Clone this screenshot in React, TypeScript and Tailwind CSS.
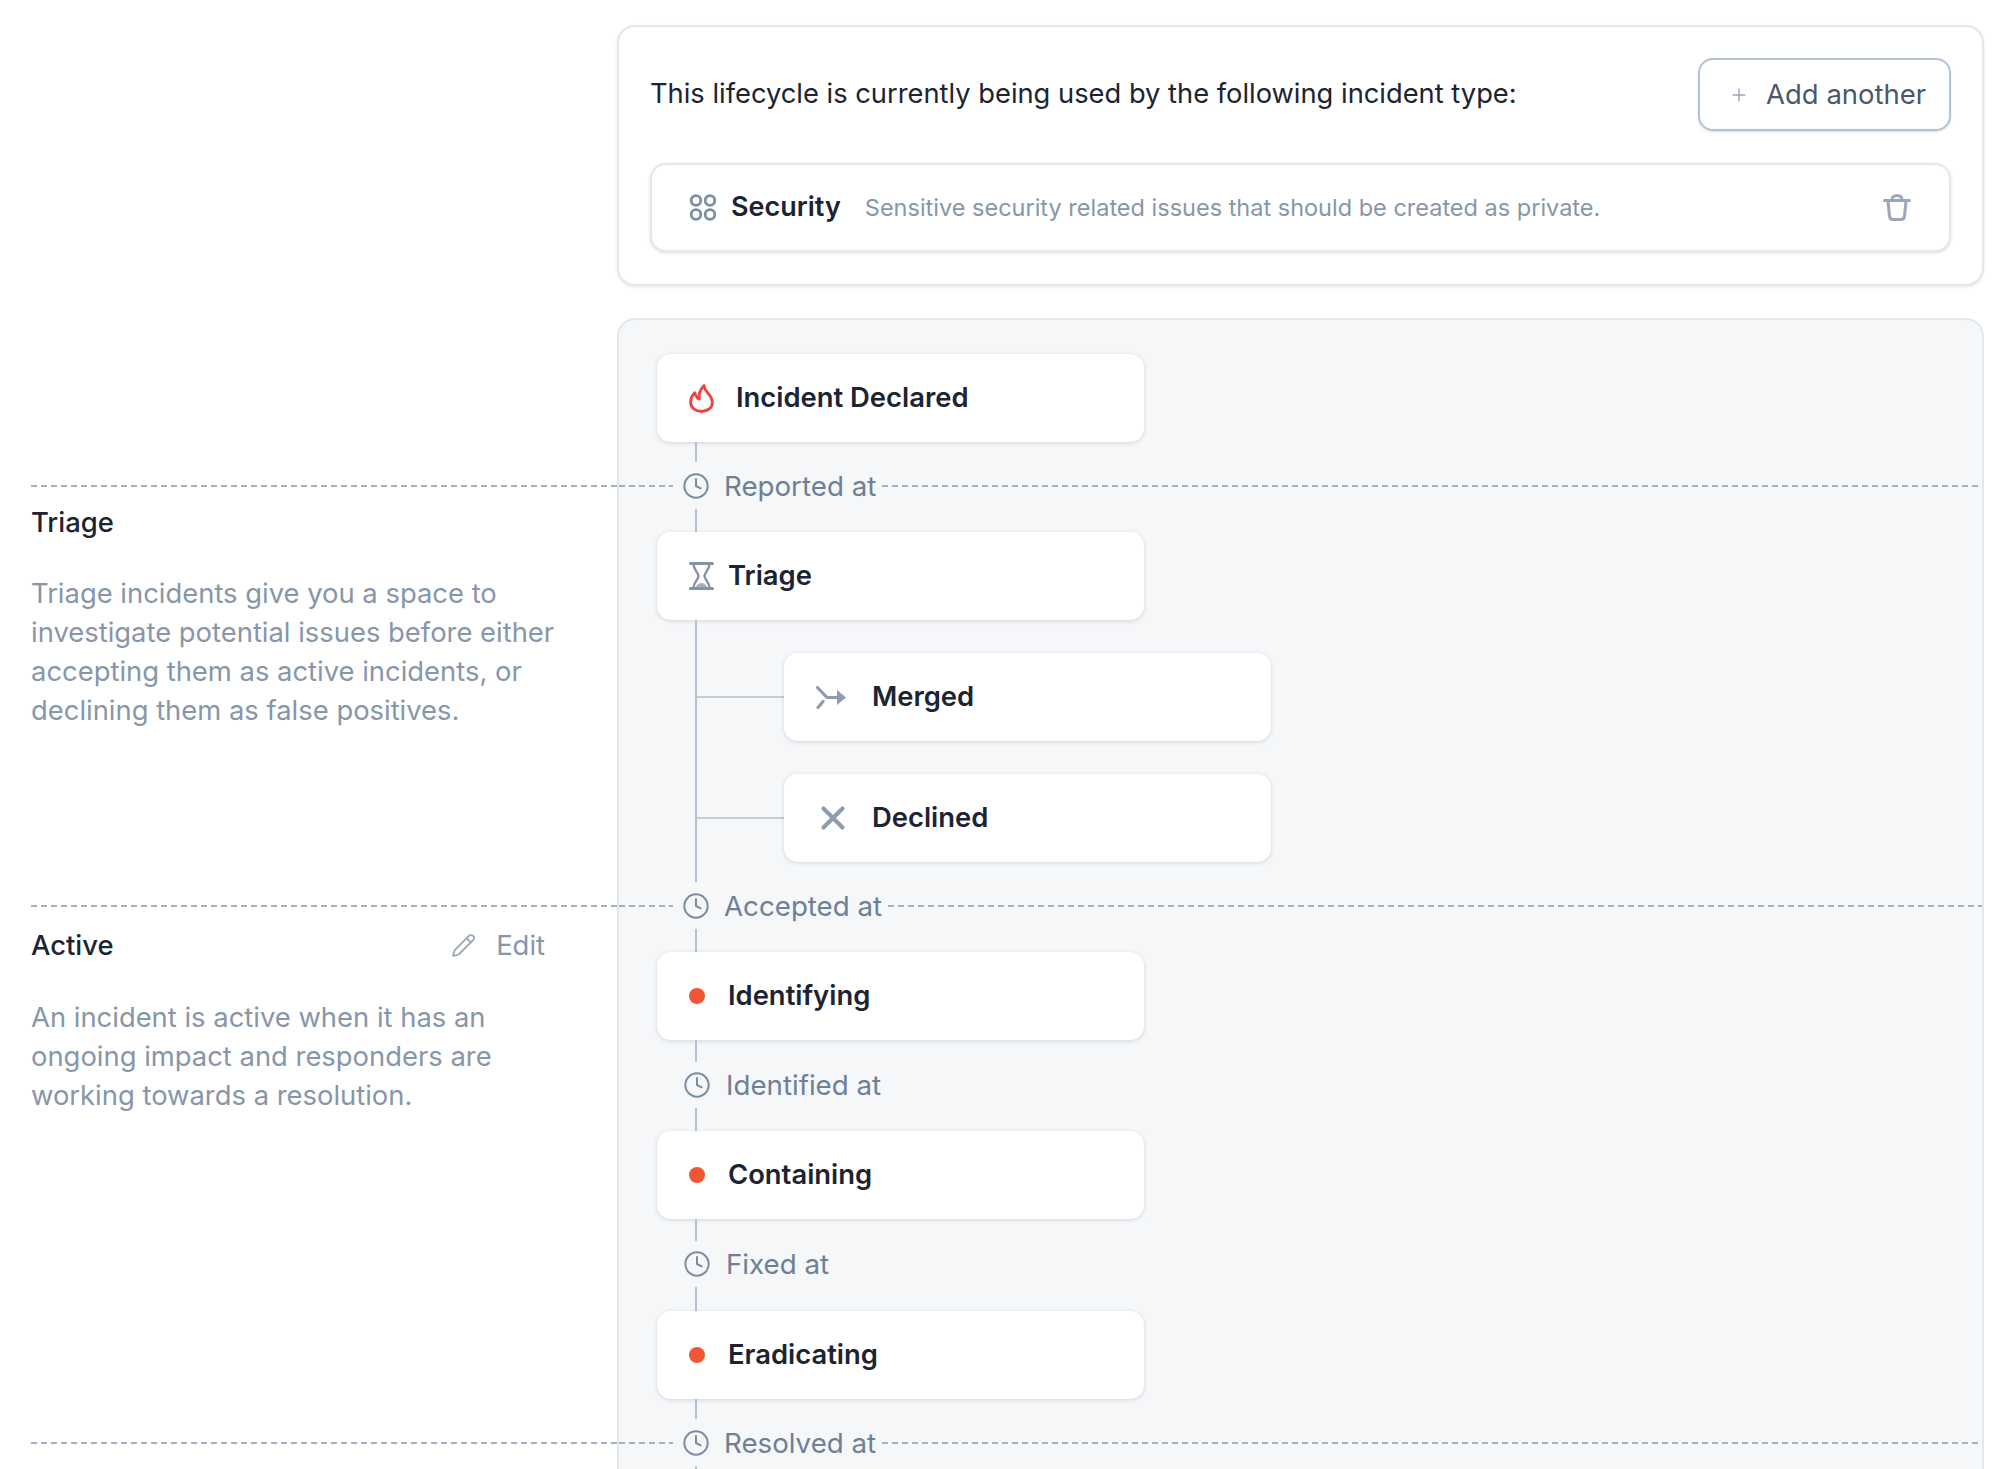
import { Clock, Pencil, Plus, X } from "lucide-react";
import type { ReactNode } from "react";

const font = { fontFamily: "Inter, 'Noto Sans', sans-serif" };

const Dash = ({ className = "" }: { className?: string }) => (
  <div
    className={`h-[2px] bg-[repeating-linear-gradient(90deg,#a3b1c2_0_6px,transparent_6px_10px)] ${className}`}
  />
);

const Vertical = ({ h }: { h: string }) => (
  <div className={`ml-[76px] w-[2px] bg-[#b3c2d2] ${h}`} />
);

const Flame = () => (
  <svg width="25" height="29" viewBox="0 0 24 28" fill="none" stroke="#ef4444" strokeWidth="2.800" strokeLinejoin="round">
    <path d="M14.500 1.500C14 7 22.500 10 22.500 18C22.500 23 17.500 26.500 12 26.500C6.500 26.500 1.500 23 1.500 17.500C1.500 14 3.500 10.500 5.500 8.500C6.500 11.500 8 14.500 10 14.500C9 9 11 5 14.500 1.500Z" />
  </svg>
);

const Hourglass = () => (
  <svg width="25" height="28" viewBox="0 0 25 28" fill="none" stroke="#8493a6" strokeWidth="2.400" strokeLinecap="round">
    <path d="M1.500 1.500h22M1.500 26.500h22" strokeWidth="3" />
    <path d="M4.500 2c0 6 5 8.500 5 12c0 3.500-5 6-5 12M20.500 2c0 6-5 8.500-5 12c0 3.500 5 6 5 12" />
    <path d="M7 25C8 22.500 10.500 21 12.500 21C14.500 21 17 22.500 18 25z" fill="#a3afbe" stroke="none" />
  </svg>
);

const MergeIcon = () => (
  <svg width="31" height="23" viewBox="0 0 31 23" fill="none" stroke="#8e9cae" strokeWidth="3.200" strokeLinecap="round">
    <path d="M1.500 1.500L11 11.500H23" />
    <path d="M2 21.500l5-6" />
    <path d="M21 4l9 7.500-9 7.500z" fill="#8e9cae" stroke="none" />
  </svg>
);

const Category = () => (
  <svg width="28" height="27" viewBox="0 0 28 27" fill="none" stroke="#7e8fa5" strokeWidth="2.800">
    <circle cx="7" cy="6.500" r="4.800" />
    <circle cx="21" cy="6.500" r="4.800" />
    <circle cx="7" cy="20.500" r="4.800" />
    <circle cx="21" cy="20.500" r="4.800" />
  </svg>
);

const Bin = () => (
  <svg width="28" height="27" viewBox="0 0 28 27" fill="none" stroke="#9aa8b9" strokeWidth="3" strokeLinecap="round" strokeLinejoin="round">
    <path d="M1.500 6.500h25" />
    <path d="M9 6c0-3 1.500-4.500 5-4.500S19 3 19 6" />
    <path d="M5 7l1.500 15c.2 2 1.500 3.500 3.500 3.500h8c2 0 3.300-1.500 3.500-3.500L23 7" />
  </svg>
);

const Dot = () => <div className="h-[16px] w-[16px] rounded-full bg-[#f25533]" />;

const Node = ({ icon, label, textClass, side }: { icon: ReactNode; label: string; textClass: string; side?: boolean }) => (
  <div
    className={`flex h-[88px] w-[487px] shrink-0 items-center rounded-[14px] bg-white pl-[32px] shadow-[0_1px_4px_rgba(71,85,105,0.2)] ${side ? "" : "ml-[38px]"}`}
  >
    <div className="flex shrink-0 items-center">{icon}</div>
    <span className={`text-[27.4px] font-semibold text-[#1c2431] ${textClass}`}>{label}</span>
  </div>
);

const MarkLabel = ({ label }: { label: string }) => (
  <div className="flex h-[46px] items-center">
    <Clock className="ml-[64px] h-[28px] w-[28px] text-[#7b8ca1]" strokeWidth={1.7} />
    <span className="ml-[15px] pt-[2px] text-[27.7px] text-[#6d8096]">{label}</span>
  </div>
);

// dashed divider that runs across both columns
const Divider = ({ label }: { label: string }) => (
  <div className="grid grid-cols-[617px_1fr]">
    <div className="flex items-center pl-[31px]">
      <Dash className="w-full" />
    </div>
    <div className="flex h-[47px] items-center border-x-2 border-[#e3e8ef] bg-[#f5f7f9]">
      <Dash className="w-[54px]" />
      <Clock className="ml-[9px] h-[28px] w-[28px] shrink-0 text-[#7b8ca1]" strokeWidth={1.7} />
      <span className="ml-[14px] mr-[6px] pt-[2px] text-[27.7px] text-[#6d8096]">{label}</span>
      <Dash className="flex-1" />
    </div>
  </div>
);

const SideNode = ({ icon, label, textClass }: { icon: ReactNode; label: string; textClass: string }) => (
  <div className="flex items-center">
    <div className="ml-[76px] h-[2px] w-[89px] bg-[#c3cfdb]" />
    <Node icon={icon} label={label} textClass={textClass} side />
  </div>
);

const Desc = ({ children }: { children: ReactNode }) => (
  <p className="w-[540px] text-[27.4px] leading-[39px] text-[#8796a9]">{children}</p>
);

export default function App() {
  return (
    <div className="h-[1469px] overflow-hidden bg-white pr-[16px]" style={font}>
      <div className="grid grid-cols-[617px_1fr]">
        <div />
        <div className="mt-[25px] mb-[32px] rounded-[18px] border-2 border-[#e3e8ef] bg-white pl-[31px] pr-[31px] pt-[31px] pb-[32px] shadow-[0_1px_3px_rgba(71,85,105,0.15)]">
          <div className="flex items-center justify-between">
            <span className="text-[27.3px] text-[#1c2431]">This lifecycle is currently being used by the following incident type:</span>
            <button className="flex h-[73px] w-[253px] items-center rounded-[15px] border-2 border-[#b4c3d4] bg-white pl-[29px] text-[27.5px] text-[#4a586c] shadow-[0_1px_2px_rgba(71,85,105,0.2)]">
              <Plus className="h-[20px] w-[20px] text-[#98a7b9]" strokeWidth={1.7} />
              <span className="ml-[17px]">Add another</span>
            </button>
          </div>
          <div className="mt-[32px] flex h-[89px] items-center rounded-[16px] border-2 border-[#e3e8ef] bg-white pl-[37px] pr-[38px] shadow-[0_1px_3px_rgba(71,85,105,0.2)]">
            <Category />
            <span className="ml-[14px] text-[27px] font-semibold text-[#1c2431]">Security</span>
            <span className="ml-[24px] flex-1 text-[23.5px] text-[#8796a9]">Sensitive security related issues that should be created as private.</span>
            <Bin />
          </div>
        </div>
      </div>

      <div className="grid grid-cols-[617px_1fr]">
        <div />
        <div className="rounded-t-[18px] border-x-2 border-t-2 border-[#e3e8ef] bg-[#f5f7f9] pt-[34px]">
          <Node icon={<Flame />} label="Incident Declared" textClass="ml-[22px]" />
          <Vertical h="h-[20px]" />
        </div>
      </div>

      <Divider label="Reported at" />

      <div className="grid grid-cols-[617px_1fr]">
        <div className="pl-[31px]">
          <div className="text-[27.4px] leading-[27px] font-medium text-[#1c2431]">Triage</div>
          <div className="mt-[38px]">
            <Desc>Triage incidents give you a space to investigate potential issues before either accepting them as active incidents, or declining them as false positives.</Desc>
          </div>
        </div>
        <div className="border-x-2 border-[#e3e8ef] bg-[#f5f7f9]">
          <Vertical h="h-[23px]" />
          <Node icon={<Hourglass />} label="Triage" textClass="ml-[14px]" />
          <div className="relative">
            <div className="absolute top-0 bottom-0 left-[76px] w-[2px] bg-[#b3c2d2]" />
            <div className="flex flex-col gap-[33px] pt-[33px] pb-[20px]">
              <SideNode icon={<MergeIcon />} label="Merged" textClass="ml-[25px]" />
              <SideNode icon={<X className="ml-[-2px] h-[38px] w-[38px] text-[#8e9cae]" strokeWidth={2.6} />} label="Declined" textClass="ml-[20px]" />
            </div>
          </div>
        </div>
      </div>

      <Divider label="Accepted at" />

      <div className="grid grid-cols-[617px_1fr]">
        <div className="pl-[31px] pt-[2px]">
          <div className="flex w-[514px] items-center justify-between leading-[28px]">
            <span className="text-[27.4px] font-medium text-[#1c2431]">Active</span>
            <span className="flex items-center text-[27.4px] text-[#8796a9]">
              <Pencil className="h-[25px] w-[25px] text-[#98a7b9]" strokeWidth={1.7} />
              <span className="ml-[20px]">Edit</span>
            </span>
          </div>
          <div className="mt-[39px]">
            <Desc>An incident is active when it has an ongoing impact and responders are working towards a resolution.</Desc>
          </div>
        </div>
        <div className="border-x-2 border-[#e3e8ef] bg-[#f5f7f9]">
          <Vertical h="h-[23px]" />
          <Node icon={<Dot />} label="Identifying" textClass="ml-[23px]" />
          <Vertical h="h-[22px]" />
          <MarkLabel label="Identified at" />
          <Vertical h="h-[23px]" />
          <Node icon={<Dot />} label="Containing" textClass="ml-[23px]" />
          <Vertical h="h-[22px]" />
          <MarkLabel label="Fixed at" />
          <Vertical h="h-[24px]" />
          <Node icon={<Dot />} label="Eradicating" textClass="ml-[23px]" />
          <Vertical h="h-[20px]" />
        </div>
      </div>

      <Divider label="Resolved at" />

      <div className="grid grid-cols-[617px_1fr]">
        <div />
        <div className="h-[10px] border-x-2 border-[#e3e8ef] bg-[#f5f7f9]">
          <Vertical h="h-[10px]" />
        </div>
      </div>
    </div>
  );
}
